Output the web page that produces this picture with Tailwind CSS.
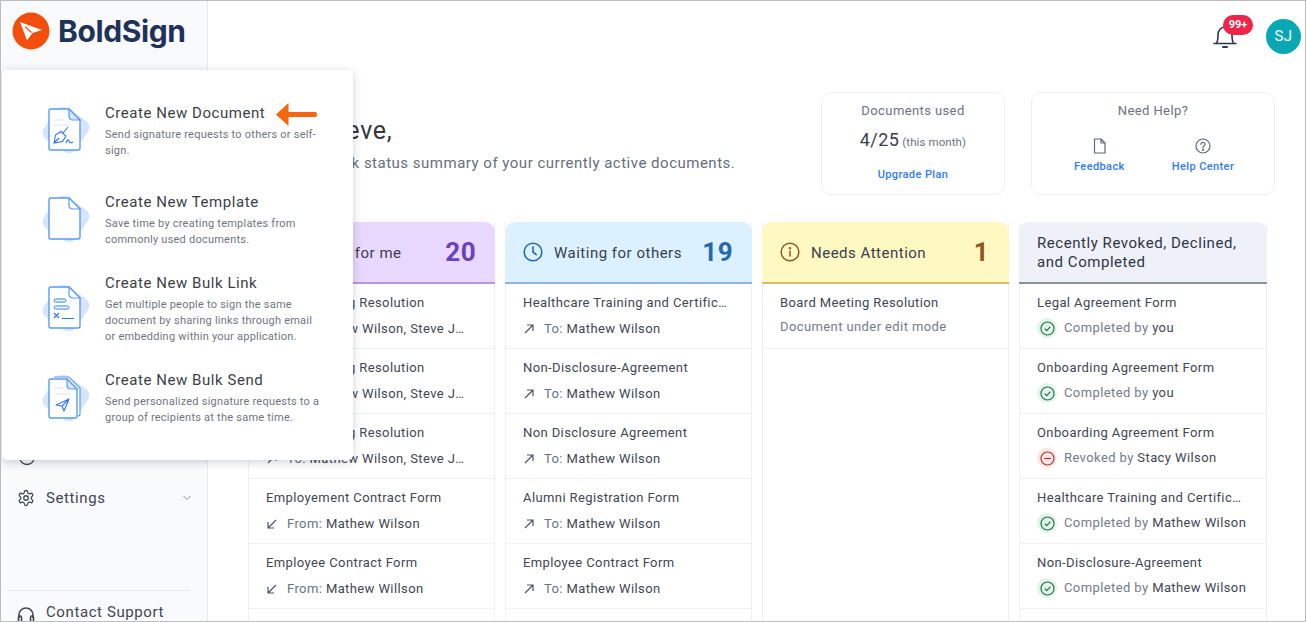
<!DOCTYPE html>
<html lang="en"><head><meta charset="utf-8"><title>BoldSign</title>
<script src="https://cdn.jsdelivr.net/npm/@tailwindcss/browser@4"></script></head>
<body class="m-0 bg-white">
<div class="relative flex w-[1306px] h-[622px] overflow-hidden border border-[#bcbcbc] bg-white font-['Roboto',sans-serif] tracking-[0.4px] text-[#3f4654]">

<aside class="flex flex-col w-[207px] h-full shrink-0 bg-[#f8fafc] border-r border-[#e6eaf0]">
  <div class="flex items-center h-[60px] pl-[11px] gap-[8px] shrink-0">
    <svg width="38" height="38" viewBox="0 0 38 38"><circle cx="19" cy="19" r="18.5" fill="#f34e0b"/><path d="M8 10 L30 18 L20.5 21 L15 28.5 Z" fill="#fff"/><path d="M13 14.5 L19.5 20.5" stroke="#f34e0b" stroke-width="1.2"/></svg>
    <span class="font-['Inter',sans-serif] font-bold text-[30px] leading-none tracking-[-0.4px] text-[#1f3259]">BoldSign</span>
  </div>
  <div class="flex-1"></div>
  <div class="flex items-center pl-[17px] h-[30px] mb-[11px]">
    <svg width="18" height="18" viewBox="0 0 18 18" fill="none" stroke="#3f4654" stroke-width="1.3"><circle cx="9" cy="9" r="7.5"/></svg>
  </div>
  <div class="flex items-center pl-[16px] pr-[15px] h-[30px] gap-[11px] text-[15px] tracking-[0.6px]">
    <svg width="18" height="18" viewBox="0 0 24 24" fill="none" stroke="#3f4654" stroke-width="1.7" stroke-linecap="round" stroke-linejoin="round"><path d="M12.22 2h-.44a2 2 0 0 0-2 2v.18a2 2 0 0 1-1 1.73l-.43.25a2 2 0 0 1-2 0l-.15-.08a2 2 0 0 0-2.73.73l-.22.38a2 2 0 0 0 .73 2.73l.15.1a2 2 0 0 1 1 1.72v.51a2 2 0 0 1-1 1.74l-.15.09a2 2 0 0 0-.73 2.73l.22.38a2 2 0 0 0 2.73.73l.15-.08a2 2 0 0 1 2 0l.43.25a2 2 0 0 1 1 1.73V20a2 2 0 0 0 2 2h.44a2 2 0 0 0 2-2v-.18a2 2 0 0 1 1-1.73l.43-.25a2 2 0 0 1 2 0l.15.08a2 2 0 0 0 2.73-.73l.22-.39a2 2 0 0 0-.73-2.73l-.15-.08a2 2 0 0 1-1-1.74v-.5a2 2 0 0 1 1-1.74l.15-.09a2 2 0 0 0 .73-2.73l-.22-.38a2 2 0 0 0-2.73-.73l-.15.08a2 2 0 0 1-2 0l-.43-.25a2 2 0 0 1-1-1.73V4a2 2 0 0 0-2-2z"/><circle cx="12" cy="12" r="3"/></svg>
    <span class="flex-1">Settings</span>
    <svg width="10" height="6" viewBox="0 0 10 6" fill="none" stroke="#8b93a1" stroke-width="1"><path d="M1.5 1 L5 4.5 L8.5 1"/></svg>
  </div>
  <div class="flex-none h-[77px]"></div>
  <div class="ml-[6px] border-t border-[#e3e8ef] mr-[17px]"></div>
  <div class="flex items-center pl-[16px] h-[42px] -mb-[12px] gap-[11px] text-[15px] tracking-[0.6px] shrink-0">
    <svg width="18" height="18" viewBox="0 0 18 18" fill="none" stroke="#3f4654" stroke-width="1.6" class="mt-[6px]"><path d="M2 12 V9 a7 7 0 0 1 14 0 V12"/><rect x="1.5" y="10" width="3" height="6" rx="1.4"/><rect x="13.5" y="10" width="3" height="6" rx="1.4"/></svg>
    <span>Contact Support</span>
  </div>
</aside>

<main class="flex-1 min-w-0 flex flex-col">
  <div class="flex items-center justify-end h-[91px] shrink-0 pr-[4px] pb-[21px] gap-[24px]">
    <div class="relative w-[26px] h-[26px] mr-[4px]">
      <svg width="26" height="26" viewBox="0 0 26 26" fill="none" stroke="#2f3645" stroke-width="1.6" stroke-linecap="round"><path d="M2 20.5 H24 M4.5 20 C6 18 6 15 6 12 C6 7.5 9 4 13 4 C17 4 20 7.5 20 12 C20 15 20 18 21.5 20"/><path d="M11 24 H15" stroke-width="2"/></svg>
      <span class="absolute left-[11px] top-[-8px] flex items-center justify-center w-[30px] h-[20px] rounded-full bg-[#ee2449] text-white text-[11px] font-bold tracking-normal">99+</span>
    </div>
    <div class="flex items-center justify-center w-[35px] h-[35px] rounded-full bg-[#07a8b4] text-white text-[15px]">SJ</div>
  </div>

  <div class="flex h-[103px] shrink-0 pl-[40px] pr-[30px] mb-[27px]">
    <div class="flex-1 min-w-0 pt-[22px] pl-[6px]">
      <h1 class="text-[25px] leading-[34px] font-normal text-[#333842] tracking-[0.7px] whitespace-nowrap">Hello Steve,</h1>
      <p class="mt-[4px] text-[15px] leading-[22px] text-[#666e7d] tracking-[0.5px] whitespace-nowrap">Here is a quick status summary of your currently active documents.</p>
    </div>
    <div class="flex flex-col items-center w-[184px] border border-[#edf1f6] rounded-[10px] pt-[9px] shrink-0">
      <div class="text-[13px] leading-[17px] text-[#6b7280]">Documents used</div>
      <div class="mt-[9px] flex items-baseline gap-[3px] leading-[24px]"><span class="text-[18px] text-[#3a404c]">4/25</span><span class="text-[11.5px] tracking-[0.1px] text-[#6b7280]">(this month)</span></div>
      <a class="mt-[13px] text-[11px] font-medium leading-[16px] text-[#2f7bf5]">Upgrade Plan</a>
    </div>
    <div class="flex flex-col items-center w-[244px] ml-[26px] border border-[#edf1f6] rounded-[10px] pt-[9px] shrink-0">
      <div class="text-[13px] leading-[17px] text-[#6b7280]">Need Help?</div>
      <div class="flex w-full mt-[19px] pl-[42px] gap-[47px] text-[11px] font-medium leading-[16px] text-[#2f7bf5]">
        <div class="flex flex-col items-center gap-[5px]">
          <svg width="15" height="16" viewBox="0 0 15 16" fill="none" stroke="#5f6877" stroke-width="1.2" stroke-linejoin="round"><path d="M2.5 1 H9 L13 5 V15 H2.5 Z M9 1 V5 H13"/></svg>
          <span>Feedback</span>
        </div>
        <div class="flex flex-col items-center gap-[5px]">
          <svg width="16" height="16" viewBox="0 0 16 16" fill="none" stroke="#5f6877" stroke-width="1.2"><circle cx="8" cy="8" r="7"/><path d="M6 6.3 a2 2 0 1 1 3 1.7 c-.7.4-1 .8-1 1.5" stroke-linecap="round"/><circle cx="8" cy="11.7" r=".5" fill="#5f6877"/></svg>
          <span>Help Center</span>
        </div>
      </div>
    </div>
  </div>

  <div class="flex gap-[10px] pl-[40px] items-stretch flex-1 min-h-0">
    <!-- Waiting for me -->
    <section class="w-[247px] shrink-0 border-x border-[#edf1f6]">
      <header class="flex items-center h-[62px] -mx-px rounded-t-[10px] bg-[#e9d8fd] border-b-2 border-[#b794e6] pl-[18px] pr-[19px]">
        <svg class="mr-[11px] shrink-0" width="20" height="20" viewBox="0 0 20 20" fill="none" stroke="#6a3fc0" stroke-width="1.5" stroke-linecap="round"><path d="M3 17 L5 12 L14 3 L17 6 L8 15 Z"/></svg>
        <span class="flex-1 pt-[2px] text-[15px] tracking-[0.5px] text-[#3a404c]">Waiting for me</span><span class="text-[26px] font-bold text-[#6a3fc0]">20</span>
      </header>
      <div class="h-[65px] border-b border-[#edf1f6] pl-[17px] pr-[26px] pt-[10px]"><div class="text-[13px] leading-[18px] truncate">Board Meeting Resolution</div><div class="flex items-center gap-[9px] mt-[8px] text-[13px] leading-[18px]"><svg class="shrink-0" width="12" height="12" viewBox="0 0 12 12" fill="none" stroke="#4b5563" stroke-width="1.2"><path d="M2 10 L10 2 M4 2 H10 V8"/></svg><span class="truncate"><span class="text-[#64748b]">To:</span> Mathew Wilson, Steve Jacob</span></div></div>
      <div class="h-[65px] border-b border-[#edf1f6] pl-[17px] pr-[26px] pt-[10px]"><div class="text-[13px] leading-[18px] truncate">Board Meeting Resolution</div><div class="flex items-center gap-[9px] mt-[8px] text-[13px] leading-[18px]"><svg class="shrink-0" width="12" height="12" viewBox="0 0 12 12" fill="none" stroke="#4b5563" stroke-width="1.2"><path d="M2 10 L10 2 M4 2 H10 V8"/></svg><span class="truncate"><span class="text-[#64748b]">To:</span> Mathew Wilson, Steve Jacob</span></div></div>
      <div class="h-[65px] border-b border-[#edf1f6] pl-[17px] pr-[26px] pt-[10px]"><div class="text-[13px] leading-[18px] truncate">Board Meeting Resolution</div><div class="flex items-center gap-[9px] mt-[8px] text-[13px] leading-[18px]"><svg class="shrink-0" width="12" height="12" viewBox="0 0 12 12" fill="none" stroke="#4b5563" stroke-width="1.2"><path d="M2 10 L10 2 M4 2 H10 V8"/></svg><span class="truncate"><span class="text-[#64748b]">To:</span> Mathew Wilson, Steve Jacob</span></div></div>
      <div class="h-[65px] border-b border-[#edf1f6] pl-[17px] pr-[26px] pt-[10px]"><div class="text-[13px] leading-[18px] truncate">Employement Contract Form</div><div class="flex items-center gap-[9px] mt-[8px] text-[13px] leading-[18px]"><svg class="shrink-0" width="12" height="12" viewBox="0 0 12 12" fill="none" stroke="#4b5563" stroke-width="1.2"><path d="M10 2 L2 10 M2 4 V10 H8"/></svg><span class="truncate"><span class="text-[#64748b]">From:</span> Mathew Wilson</span></div></div>
      <div class="h-[65px] border-b border-[#edf1f6] pl-[17px] pr-[26px] pt-[10px]"><div class="text-[13px] leading-[18px] truncate">Employee Contract Form</div><div class="flex items-center gap-[9px] mt-[8px] text-[13px] leading-[18px]"><svg class="shrink-0" width="12" height="12" viewBox="0 0 12 12" fill="none" stroke="#4b5563" stroke-width="1.2"><path d="M10 2 L2 10 M2 4 V10 H8"/></svg><span class="truncate"><span class="text-[#64748b]">From:</span> Mathew Willson</span></div></div>
    </section>
    <!-- Waiting for others -->
    <section class="w-[247px] shrink-0 border-x border-[#edf1f6]">
      <header class="flex items-center h-[62px] -mx-px rounded-t-[10px] bg-[#dcf1ff] border-b-2 border-[#8db5e2] pl-[18px] pr-[19px]">
        <svg class="mr-[11px] shrink-0" width="20" height="20" viewBox="0 0 20 20" fill="none" stroke="#2668b0" stroke-width="1.6" stroke-linecap="round"><circle cx="10" cy="10" r="8.8"/><path d="M10 4.8 V10 L13.3 12.6"/></svg>
        <span class="flex-1 pt-[2px] text-[15px] tracking-[0.5px] text-[#3a404c]">Waiting for others</span><span class="text-[26px] font-bold text-[#2668b0]">19</span>
      </header>
      <div class="h-[65px] border-b border-[#edf1f6] pl-[17px] pr-[24px] pt-[10px]"><div class="text-[13px] leading-[18px] truncate">Healthcare Training and Certification Form</div><div class="flex items-center gap-[9px] mt-[8px] text-[13px] leading-[18px]"><svg class="shrink-0" width="12" height="12" viewBox="0 0 12 12" fill="none" stroke="#4b5563" stroke-width="1.2"><path d="M2 10 L10 2 M4 2 H10 V8"/></svg><span class="truncate"><span class="text-[#64748b]">To:</span> Mathew Wilson</span></div></div>
      <div class="h-[65px] border-b border-[#edf1f6] pl-[17px] pr-[24px] pt-[10px]"><div class="text-[13px] leading-[18px] truncate">Non-Disclosure-Agreement</div><div class="flex items-center gap-[9px] mt-[8px] text-[13px] leading-[18px]"><svg class="shrink-0" width="12" height="12" viewBox="0 0 12 12" fill="none" stroke="#4b5563" stroke-width="1.2"><path d="M2 10 L10 2 M4 2 H10 V8"/></svg><span class="truncate"><span class="text-[#64748b]">To:</span> Mathew Wilson</span></div></div>
      <div class="h-[65px] border-b border-[#edf1f6] pl-[17px] pr-[24px] pt-[10px]"><div class="text-[13px] leading-[18px] truncate">Non Disclosure Agreement</div><div class="flex items-center gap-[9px] mt-[8px] text-[13px] leading-[18px]"><svg class="shrink-0" width="12" height="12" viewBox="0 0 12 12" fill="none" stroke="#4b5563" stroke-width="1.2"><path d="M2 10 L10 2 M4 2 H10 V8"/></svg><span class="truncate"><span class="text-[#64748b]">To:</span> Mathew Wilson</span></div></div>
      <div class="h-[65px] border-b border-[#edf1f6] pl-[17px] pr-[24px] pt-[10px]"><div class="text-[13px] leading-[18px] truncate">Alumni Registration Form</div><div class="flex items-center gap-[9px] mt-[8px] text-[13px] leading-[18px]"><svg class="shrink-0" width="12" height="12" viewBox="0 0 12 12" fill="none" stroke="#4b5563" stroke-width="1.2"><path d="M2 10 L10 2 M4 2 H10 V8"/></svg><span class="truncate"><span class="text-[#64748b]">To:</span> Mathew Wilson</span></div></div>
      <div class="h-[65px] border-b border-[#edf1f6] pl-[17px] pr-[24px] pt-[10px]"><div class="text-[13px] leading-[18px] truncate">Employee Contract Form</div><div class="flex items-center gap-[9px] mt-[8px] text-[13px] leading-[18px]"><svg class="shrink-0" width="12" height="12" viewBox="0 0 12 12" fill="none" stroke="#4b5563" stroke-width="1.2"><path d="M2 10 L10 2 M4 2 H10 V8"/></svg><span class="truncate"><span class="text-[#64748b]">To:</span> Mathew Wilson</span></div></div>
    </section>
    <!-- Needs attention -->
    <section class="w-[247px] shrink-0 border-x border-[#edf1f6]">
      <header class="flex items-center h-[62px] -mx-px rounded-t-[10px] bg-[#fef9c3] border-b-2 border-[#dcbb63] pl-[18px] pr-[20px]">
        <svg class="mr-[11px] shrink-0" width="20" height="20" viewBox="0 0 20 20" fill="none" stroke="#92581a" stroke-width="1.5" stroke-linecap="round"><circle cx="10" cy="10" r="8.8"/><path d="M10 9.2 V14"/><circle cx="10" cy="6.3" r=".5" fill="#92581a"/></svg>
        <span class="flex-1 pt-[2px] text-[15px] tracking-[0.5px] text-[#3a404c]">Needs Attention</span><span class="text-[26px] font-bold text-[#92581a]">1</span>
      </header>
      <div class="h-[65px] border-b border-[#edf1f6] pl-[17px] pr-[24px] pt-[10px]"><div class="text-[13px] leading-[18px] truncate">Board Meeting Resolution</div><div class="mt-[6px] text-[13px] leading-[18px] text-[#737b8c]">Document under edit mode</div></div>
    </section>
    <!-- Recent -->
    <section class="w-[248px] shrink-0 border-x border-[#edf1f6]">
      <header class="flex items-center h-[62px] -mx-px rounded-t-[10px] bg-[#eef1f7] border-b-2 border-[#8a8f9c] pl-[18px] pr-[19px]">
        <span class="pt-[2px] text-[15px] tracking-[0.55px] leading-[19px] text-[#2f3645]">Recently Revoked, Declined, and Completed</span>
      </header>
      <div class="h-[65px] border-b border-[#edf1f6] pl-[17px] pt-[10px]"><div class="mr-[23px] text-[13px] leading-[18px] truncate">Legal Agreement Form</div><div class="flex items-center gap-[7px] mt-[6px] text-[13px] leading-[18px] whitespace-nowrap"><span class="flex items-center justify-center w-[20px] h-[20px] rounded-full bg-[#dff6e6] shrink-0"><svg width="15" height="15" viewBox="0 0 15 15" fill="none" stroke="#2f6b52" stroke-width="1.2"><circle cx="7.5" cy="7.5" r="6.5"/><path d="M4.7 7.7 L6.7 9.7 L10.4 5.6"/></svg></span><span><span class="text-[#737b8c]">Completed by</span> you</span></div></div>
      <div class="h-[65px] border-b border-[#edf1f6] pl-[17px] pt-[10px]"><div class="mr-[23px] text-[13px] leading-[18px] truncate">Onboarding Agreement Form</div><div class="flex items-center gap-[7px] mt-[6px] text-[13px] leading-[18px] whitespace-nowrap"><span class="flex items-center justify-center w-[20px] h-[20px] rounded-full bg-[#dff6e6] shrink-0"><svg width="15" height="15" viewBox="0 0 15 15" fill="none" stroke="#2f6b52" stroke-width="1.2"><circle cx="7.5" cy="7.5" r="6.5"/><path d="M4.7 7.7 L6.7 9.7 L10.4 5.6"/></svg></span><span><span class="text-[#737b8c]">Completed by</span> you</span></div></div>
      <div class="h-[65px] border-b border-[#edf1f6] pl-[17px] pt-[10px]"><div class="mr-[23px] text-[13px] leading-[18px] truncate">Onboarding Agreement Form</div><div class="flex items-center gap-[7px] mt-[6px] text-[13px] leading-[18px] whitespace-nowrap"><span class="flex items-center justify-center w-[20px] h-[20px] rounded-full bg-[#fde5e5] shrink-0"><svg width="15" height="15" viewBox="0 0 15 15" fill="none" stroke="#a93a32" stroke-width="1.2"><circle cx="7.5" cy="7.5" r="6.5"/><path d="M4.2 7.5 H10.8"/></svg></span><span><span class="text-[#737b8c]">Revoked by</span> Stacy Wilson</span></div></div>
      <div class="h-[65px] border-b border-[#edf1f6] pl-[17px] pt-[10px]"><div class="mr-[23px] text-[13px] leading-[18px] truncate">Healthcare Training and Certification Form</div><div class="flex items-center gap-[7px] mt-[6px] text-[13px] leading-[18px] whitespace-nowrap"><span class="flex items-center justify-center w-[20px] h-[20px] rounded-full bg-[#dff6e6] shrink-0"><svg width="15" height="15" viewBox="0 0 15 15" fill="none" stroke="#2f6b52" stroke-width="1.2"><circle cx="7.5" cy="7.5" r="6.5"/><path d="M4.7 7.7 L6.7 9.7 L10.4 5.6"/></svg></span><span><span class="text-[#737b8c]">Completed by</span> Mathew Wilson</span></div></div>
      <div class="h-[65px] border-b border-[#edf1f6] pl-[17px] pt-[10px]"><div class="mr-[23px] text-[13px] leading-[18px] truncate">Non-Disclosure-Agreement</div><div class="flex items-center gap-[7px] mt-[6px] text-[13px] leading-[18px] whitespace-nowrap"><span class="flex items-center justify-center w-[20px] h-[20px] rounded-full bg-[#dff6e6] shrink-0"><svg width="15" height="15" viewBox="0 0 15 15" fill="none" stroke="#2f6b52" stroke-width="1.2"><circle cx="7.5" cy="7.5" r="6.5"/><path d="M4.7 7.7 L6.7 9.7 L10.4 5.6"/></svg></span><span><span class="text-[#737b8c]">Completed by</span> Mathew Wilson</span></div></div>
    </section>
  </div>
</main>

<!-- Create menu popover -->
<div class="absolute left-[1px] top-[69px] w-[351px] h-[390px] rounded-[5px] bg-white shadow-[0_2px_10px_rgba(30,41,59,0.22)] pt-[30px] text-[#6f7580] z-10">
  <div class="relative flex h-[88px] pl-[38px]">
    <svg class="shrink-0 mt-[7px] overflow-visible" width="48" height="48" viewBox="0 0 48 48" fill="none"><rect x="7" y="4" width="38" height="38" rx="8" transform="rotate(35 26 23)" fill="#d6e5fb"/><path d="M11 2 H29 L40 13 V41 Q40 43 38 43 H11 Q9 43 9 41 V4 Q9 2 11 2 Z" fill="#fff" stroke="#5a9bf7" stroke-width="1.4"/><path d="M29 2 V9 Q29 13 33 13 H40 Z" fill="#d5e5fb" stroke="#5a9bf7" stroke-width="1.2"/><path d="M14 13 H24 M14 18 H31" stroke="#dbe8fb" stroke-width="1.2"/><path d="M14 36 L15.5 28 L21 24.5 L26 29 L22.5 34.5 Z M14 36 L19 31 M23 26 L28 20 M26 36 Q28 31 29 34 Q30 37 33 35" stroke="#2f78e8" stroke-width="1.1"/></svg>
    <div class="ml-[17px] w-[218px]"><div class="text-[15px] leading-[22px] tracking-[0.55px] text-[#3a3f47] mt-[2px]">Create New Document</div><p class="text-[11px] leading-[16px] mt-[3px] tracking-[0.23px]">Send signature requests to others or self-sign.</p></div>
    <svg class="absolute left-[271px] top-[3px]" width="46" height="24" viewBox="0 0 46 24"><path d="M3 11.5 L15.5 0 V9 H43 Q45 11.5 43 14 H15.5 V23 Z" fill="#f4660f"/></svg>
  </div>
  <div class="flex h-[81px] pl-[38px]">
    <svg class="shrink-0 mt-[8px] overflow-visible" width="48" height="48" viewBox="0 0 48 48" fill="none"><rect x="7" y="4" width="38" height="38" rx="8" transform="rotate(35 26 23)" fill="#d6e5fb"/><path d="M11 2 H29 L40 13 V41 Q40 43 38 43 H11 Q9 43 9 41 V4 Q9 2 11 2 Z" fill="#fff" stroke="#5a9bf7" stroke-width="1.4"/><path d="M29 2 V9 Q29 13 33 13 H40 Z" fill="#fff" stroke="#5a9bf7" stroke-width="1.2"/></svg>
    <div class="ml-[17px] w-[218px]"><div class="text-[15px] leading-[22px] tracking-[0.55px] text-[#3a3f47] mt-[3px]">Create New Template</div><p class="text-[11px] leading-[16px] mt-[3px] tracking-[0.23px]">Save time by creating templates from commonly used documents.</p></div>
  </div>
  <div class="flex h-[97px] pl-[38px]">
    <svg class="shrink-0 mt-[16px] overflow-visible" width="48" height="48" viewBox="0 0 48 48" fill="none"><rect x="7" y="4" width="38" height="38" rx="8" transform="rotate(35 26 23)" fill="#d6e5fb"/><path d="M11 2 H29 L40 13 V41 Q40 43 38 43 H11 Q9 43 9 41 V4 Q9 2 11 2 Z" fill="#fff" stroke="#5a9bf7" stroke-width="1.4"/><path d="M29 2 V9 Q29 13 33 13 H40 Z" fill="#fff" stroke="#5a9bf7" stroke-width="1.2"/><rect x="14" y="14" width="12" height="3" rx="1.5" stroke="#2f78e8" stroke-width="1"/><rect x="14" y="21" width="15" height="3" rx="1.5" stroke="#2f78e8" stroke-width="1"/><path d="M14 28 L19 33 M19 28 L14 33 M22 33.5 H34" stroke="#2f78e8" stroke-width="1.1"/></svg>
    <div class="ml-[17px] w-[218px]"><div class="text-[15px] leading-[22px] tracking-[0.55px] text-[#3a3f47] mt-[3px]">Create New Bulk Link</div><p class="text-[11px] leading-[16px] mt-[3px] tracking-[0.23px]">Get multiple people to sign the same document by sharing links through email or embedding within your application.</p></div>
  </div>
  <div class="flex pl-[38px]">
    <svg class="shrink-0 mt-[9px] overflow-visible" width="48" height="48" viewBox="0 0 48 48" fill="none"><rect x="7" y="4" width="38" height="38" rx="8" transform="rotate(35 26 23)" fill="#d6e5fb"/><path d="M14 2 H29 L40 13 V39 Q40 41 38 41" fill="#fff" stroke="#5a9bf7" stroke-width="1.2"/><path d="M11 4 H27 L37 14 V41 Q37 43 35 43 H11 Q9 43 9 41 V6 Q9 4 11 4 Z" fill="#fff" stroke="#5a9bf7" stroke-width="1.4"/><path d="M27 4 V10 Q27 14 31 14 H37 Z" fill="#d5e5fb" stroke="#5a9bf7" stroke-width="1.2"/><path d="M14 13 H23 M14 19 H30" stroke="#d5e5fb" stroke-width="1.2"/><path d="M16 30 L29 24 L24 36 L22 31 Z M22 31 L29 24" stroke="#2f78e8" stroke-width="1.1" stroke-linejoin="round"/></svg>
    <div class="ml-[17px] w-[218px]"><div class="text-[15px] leading-[22px] tracking-[0.55px] text-[#3a3f47] mt-[3px]">Create New Bulk Send</div><p class="text-[11px] leading-[16px] mt-[3px] tracking-[0.23px]">Send personalized signature requests to a group of recipients at the same time.</p></div>
  </div>
</div>
</div>
</body></html>
